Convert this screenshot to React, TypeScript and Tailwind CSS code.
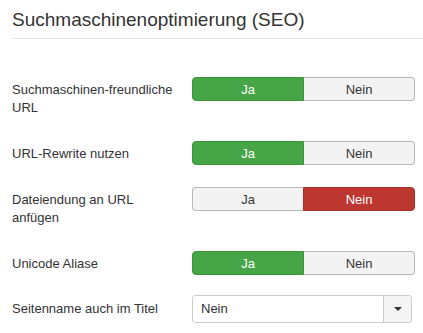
import React from 'react';

type Toggle = { label: string[]; value: 'ja' | 'nein'; mb: string };

const rows: Toggle[] = [
    { label: ['Suchmaschinen-freundliche', 'URL'], value: 'ja', mb: 'mb-[24px]' },
    { label: ['URL-Rewrite nutzen'], value: 'ja', mb: 'mb-[22px]' },
    { label: ['Dateiendung an URL', 'anfügen'], value: 'nein', mb: 'mb-[24px]' },
    { label: ['Unicode Aliase'], value: 'ja', mb: 'mb-[20px]' },
];

const YesNo: React.FC<{ value: 'ja' | 'nein' }> = ({ value }) => {
    const off = 'bg-[#f3f3f3] text-[#333] border-[#b8b8b8]';
    return (
        <div className="flex w-[223px] h-[24px] text-[13px] leading-none">
            <div
                className={`flex-1 flex items-center justify-center border rounded-l-[4px] ${
                    value === 'ja' ? 'bg-[#46a546] text-white border-[#3d933d]' : off + ' border-r-0'
                }`}
            >
                Ja
            </div>
            <div
                className={`flex-1 flex items-center justify-center border rounded-r-[4px] ${
                    value === 'nein' ? 'bg-[#bd362f] text-white border-[#a8302a]' : off + ' border-l-0'
                }`}
            >
                Nein
            </div>
        </div>
    );
};

const App: React.FC = () => {
    return (
        <div className="w-[423px] h-[333px] bg-white text-[#333] font-['Liberation_Sans',Arial,sans-serif] pl-[12px] pt-[8px] overflow-hidden">
            <div className="text-[19px] leading-[24px] pb-[6px] border-b border-[#e5e5e5]">
                Suchmaschinenoptimierung (SEO)
            </div>
            <div className="mt-[38px] flex flex-col">
                {rows.map((r) => (
                    <div key={r.label[0]} className={`flex ${r.mb}`}>
                        <div className="w-[180px] pt-[4px] text-[13px] leading-[18px]">
                            {r.label.map((l) => (
                                <div key={l}>{l}</div>
                            ))}
                        </div>
                        <YesNo value={r.value} />
                    </div>
                ))}
                <div className="flex">
                    <div className="w-[180px] pt-[5px] text-[13px] leading-[18px]">Seitenname auch im Titel</div>
                    <div className="flex w-[220px] h-[28px] border border-[#ccc] rounded-[3px] text-[13px]">
                        <div className="flex-1 flex items-center pl-[8px]">Nein</div>
                        <div className="w-[28px] flex items-center justify-center border-l border-[#ccc] bg-[#f5f5f5] rounded-r-[3px]">
                            <div className="w-0 h-0 border-l-[4px] border-r-[4px] border-t-[4px] border-l-transparent border-r-transparent border-t-[#333]" />
                        </div>
                    </div>
                </div>
            </div>
        </div>
    );
};

export default App;
